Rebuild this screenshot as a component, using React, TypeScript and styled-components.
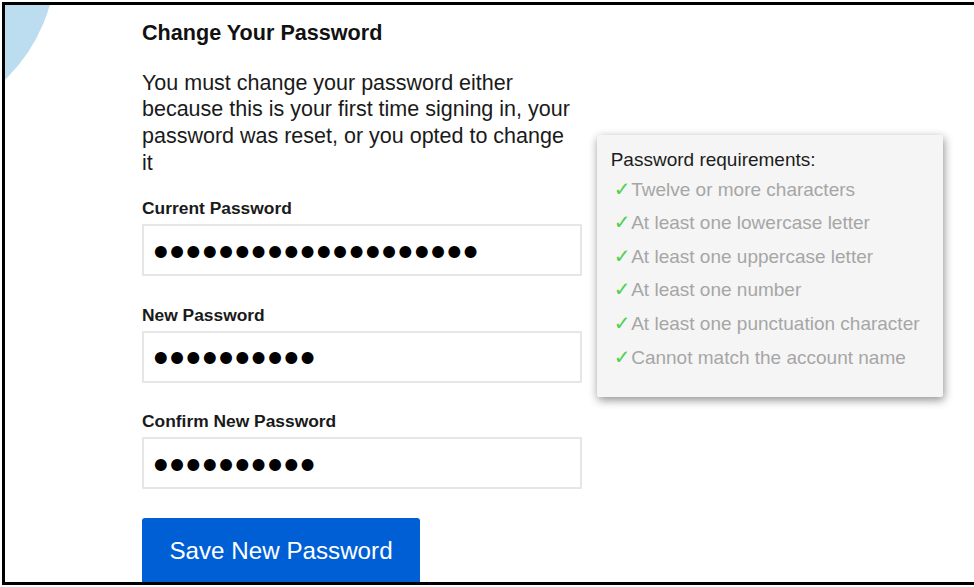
import React from "react";
import styled, { createGlobalStyle } from "styled-components";

const Global = createGlobalStyle`
  html, body { margin: 0; padding: 0; background: #fff; }
  body { font-family: "Liberation Sans", Arial, sans-serif; color: #111; }
  * { box-sizing: border-box; }
`;

const Frame = styled.div`
  position: relative;
  margin: 2px 0 0 2px;
  height: 583px;
  border: 3px solid #000;
  border-right: none;
  overflow: hidden;
  background: #fff;
`;

const Circle = styled.div`
  position: absolute;
  left: -281px;
  top: -211px;
  width: 332px;
  height: 332px;
  border-radius: 50%;
  background: #bcdcf0;
`;

const Content = styled.div`
  position: relative;
  display: flex;
  flex-direction: column;
  align-items: flex-start;
  padding: 16px 0 0 137px;
`;

const Title = styled.h2`
  margin: 0;
  font-size: 21.6px;
  font-weight: bold;
  line-height: 24px;
  color: #111;
`;

const Intro = styled.p`
  margin: 24.6px 0 0;
  width: 434px;
  font-size: 21.5px;
  line-height: 26.7px;
  color: #1a1a1a;
`;

const Form = styled.form`
  display: flex;
  flex-direction: column;
  margin-top: 21.6px;
`;

const Field = styled.div`
  display: flex;
  flex-direction: column;
  margin-bottom: 28.7px;
`;

const Label = styled.label`
  font-size: 17.4px;
  font-weight: bold;
  line-height: 20px;
  margin-bottom: 6px;
  color: #1a1a1a;
`;

const Input = styled.input`
  width: 440px;
  height: 52px;
  border: 2px solid #e6e6e6;
  border-radius: 1px;
  padding: 1px 0 0 10px;
  font-family: "DejaVu Sans", sans-serif;
  font-size: 15.6px;
  letter-spacing: 2.7px;
  color: #000;
  background: #fff;
  outline: none;
`;

const SaveButton = styled.button`
  width: 278px;
  height: 66px;
  border: none;
  border-radius: 3px;
  background: #005fd5;
  color: #fff;
  font-family: "Liberation Sans", Arial, sans-serif;
  font-size: 24.2px;
  cursor: pointer;
`;

const Tooltip = styled.div`
  position: absolute;
  left: 592px;
  top: 130px;
  width: 346px;
  height: 262px;
  padding: 14px 0 0 13.7px;
  background: #f5f5f5;
  border-radius: 2px;
  box-shadow: 1px 3px 10px rgba(0, 0, 0, 0.45);
`;

const TipTitle = styled.div`
  font-size: 19px;
  line-height: 22px;
  color: #1c1c1c;
`;

const ReqList = styled.ul`
  list-style: none;
  margin: 1.6px 0 0;
  padding: 0 0 0 3px;
`;

const Req = styled.li`
  display: flex;
  align-items: baseline;
  height: 33.6px;
  font-size: 19px;
  line-height: 33.6px;
  color: #a6a6a6;
`;

const Check = styled.span`
  display: inline-block;
  width: 17.5px;
  font-family: "DejaVu Sans", sans-serif;
  font-size: 20px;
  line-height: 33.6px;
  color: #4fd24f;
`;

const requirements = [
  "Twelve or more characters",
  "At least one lowercase letter",
  "At least one uppercase letter",
  "At least one number",
  "At least one punctuation character",
  "Cannot match the account name",
];

const fields = [
  { id: "current", label: "Current Password", length: 20 },
  { id: "new", label: "New Password", length: 10 },
  { id: "confirm", label: "Confirm New Password", length: 10 },
];

export default function App() {
  return (
    <>
      <Global />
      <Frame>
        <Circle />
        <Content>
          <Title>Change Your Password</Title>
          <Intro>
            You must change your password either because this is your first
            time signing in, your password was reset, or you opted to change it
          </Intro>
          <Form onSubmit={(e) => e.preventDefault()}>
            {fields.map((f) => (
              <Field key={f.id}>
                <Label htmlFor={f.id}>{f.label}</Label>
                <Input
                  id={f.id}
                  type="text"
                  readOnly
                  value={"●".repeat(f.length)}
                />
              </Field>
            ))}
            <SaveButton type="submit">Save New Password</SaveButton>
          </Form>
        </Content>
        <Tooltip>
          <TipTitle>Password requirements:</TipTitle>
          <ReqList>
            {requirements.map((r) => (
              <Req key={r}>
                <Check>✓</Check>
                {r}
              </Req>
            ))}
          </ReqList>
        </Tooltip>
      </Frame>
    </>
  );
}
